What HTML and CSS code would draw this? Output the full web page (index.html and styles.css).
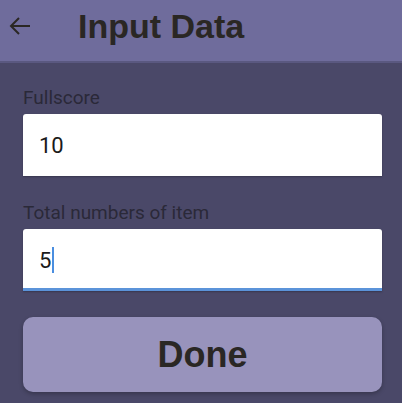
FILE: index.html
```html
<!DOCTYPE html>
<html>
<head>
<meta charset="utf-8">
<link rel="stylesheet" href="styles.css">
</head>
<body>
<header class="appbar">
  <svg class="back" width="22" height="20" viewBox="0 0 22 20"><path d="M21 10H2M10 2L2 10l8 8" fill="none" stroke="#2a2724" stroke-width="2"/></svg>
  <h1 class="title">Input Data</h1>
</header>
<main class="content">
  <label class="label">Fullscore</label>
  <div class="field"><span class="value">10</span></div>
  <label class="label second">Total numbers of item</label>
  <div class="field focused"><span class="value">5</span><span class="caret"></span></div>
  <button class="done">Done</button>
</main>
</body>
</html>
```
FILE: styles.css
```css
html, body { margin: 0; padding: 0; }
body {
  width: 402px;
  height: 403px;
  overflow: hidden;
  background: #4a4868;
  font-family: Roboto, "Noto Sans", sans-serif;
}
.appbar {
  height: 61px;
  background: #6f6c9c;
  border-bottom: 2px solid #5a5880;
  display: flex;
  align-items: center;
  padding-left: 9px;
  box-sizing: content-box;
}
.back { margin-top: -9px; }
.title {
  margin: -8px 0 0 47px;
  font-family: "Liberation Sans", Arial, sans-serif;
  font-weight: bold;
  font-size: 34px;
  color: #2a2724;
}
.content {
  padding: 24px 20px 0 23px;
  display: flex;
  flex-direction: column;
}
.label {
  font-size: 19px;
  color: #2a2938;
  line-height: 22px;
  height: 22px;
  margin-bottom: 5px;
}
.label.second { margin-top: 26px; margin-bottom: 5px; }
.field {
  height: 62px;
  background: #fff;
  border-radius: 3px 3px 0 0;
  display: flex;
  align-items: center;
  padding-left: 16px;
  box-sizing: border-box;
  box-shadow: 0 1px 2px rgba(0,0,0,0.25);
}
.field.focused {
  border-bottom: 3px solid #5b93d9;
  padding-top: 3px;
}
.value {
  font-size: 22px;
  color: #1a1a1a;
}
.caret {
  display: inline-block;
  width: 2px;
  height: 26px;
  background: #4a8ee0;
  margin-left: 1px;
}
.done {
  margin-top: 26px;
  height: 75px;
  border: none;
  border-radius: 10px;
  background: #9893bc;
  font-family: "Liberation Sans", Arial, sans-serif;
  font-weight: bold;
  font-size: 36px;
  color: #2a2724;
  box-shadow: 0 2px 4px rgba(0,0,0,0.25);
  padding: 0;
}
```
